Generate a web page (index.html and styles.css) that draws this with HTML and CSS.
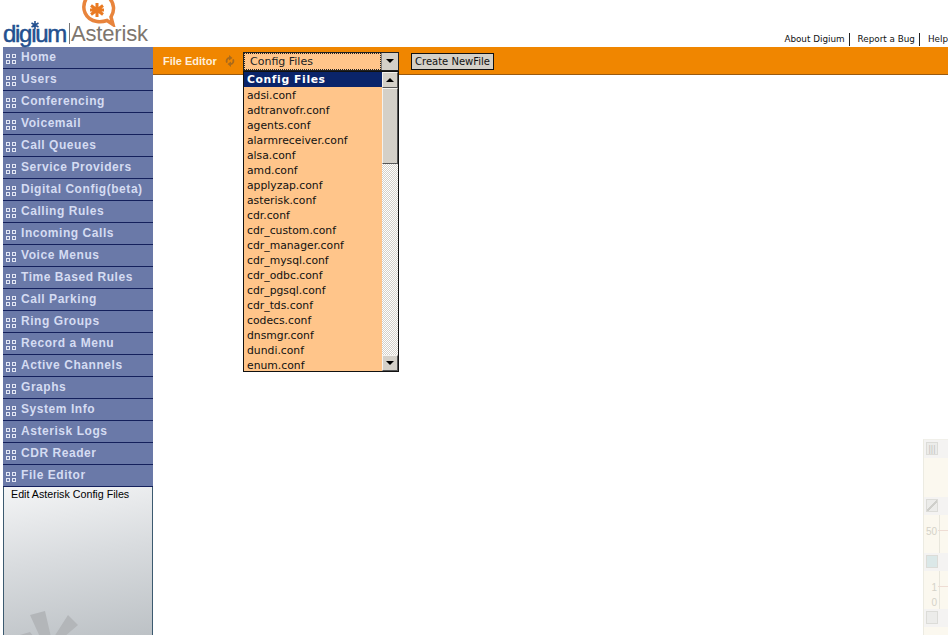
FILE: index.html

```html
<!DOCTYPE html>
<html lang="en">
<head>
    <meta charset="UTF-8">
    <title>Asterisk GUI - File Editor</title>
    <link rel="stylesheet" href="styles.css">
</head>
<body>

    <div class="header">
        <div class="logo">
            <span class="logo-digium">digium</span>
            <span class="logo-asterisk">Asterisk</span>
            <svg class="logo-dot" width="8" height="8" viewBox="0 0 8 8">
                <path d="M4 0 L4 8 M0.5 2 L7.5 6 M7.5 2 L0.5 6" stroke="#23508f" stroke-width="1.6"/>
            </svg>
            <svg class="logo-bubble" width="38" height="27" viewBox="0 0 38 27">
                <path d="M6 -1 C1 8 5 20 17 21.5 C21 22 24 21.5 27 20.5 L33 24.5 L31 17 C35 11 34 3 30 -1" fill="#fff" stroke="#e8843c" stroke-width="3.5"/>
                <path d="M17 3 L17 17 M11 5.5 L23 14.5 M23 5.5 L11 14.5 M10 10 L24 10" stroke="#ea7a22" stroke-width="3"/>
            </svg>
        </div>
        <div class="top-links">
            <a class="top-link">About Digium</a>
            <a class="top-link">Report a Bug</a>
            <a class="top-link last">Help</a>
        </div>
    </div>

    <div class="main">
        <div class="sidebar">
            <div class="menu-item"><span class="dots"><i></i><i></i><i></i><i></i></span>Home</div>
            <div class="menu-item"><span class="dots"><i></i><i></i><i></i><i></i></span>Users</div>
            <div class="menu-item"><span class="dots"><i></i><i></i><i></i><i></i></span>Conferencing</div>
            <div class="menu-item"><span class="dots"><i></i><i></i><i></i><i></i></span>Voicemail</div>
            <div class="menu-item"><span class="dots"><i></i><i></i><i></i><i></i></span>Call Queues</div>
            <div class="menu-item"><span class="dots"><i></i><i></i><i></i><i></i></span>Service Providers</div>
            <div class="menu-item"><span class="dots"><i></i><i></i><i></i><i></i></span>Digital Config(beta)</div>
            <div class="menu-item"><span class="dots"><i></i><i></i><i></i><i></i></span>Calling Rules</div>
            <div class="menu-item"><span class="dots"><i></i><i></i><i></i><i></i></span>Incoming Calls</div>
            <div class="menu-item"><span class="dots"><i></i><i></i><i></i><i></i></span>Voice Menus</div>
            <div class="menu-item"><span class="dots"><i></i><i></i><i></i><i></i></span>Time Based Rules</div>
            <div class="menu-item"><span class="dots"><i></i><i></i><i></i><i></i></span>Call Parking</div>
            <div class="menu-item"><span class="dots"><i></i><i></i><i></i><i></i></span>Ring Groups</div>
            <div class="menu-item"><span class="dots"><i></i><i></i><i></i><i></i></span>Record a Menu</div>
            <div class="menu-item"><span class="dots"><i></i><i></i><i></i><i></i></span>Active Channels</div>
            <div class="menu-item"><span class="dots"><i></i><i></i><i></i><i></i></span>Graphs</div>
            <div class="menu-item"><span class="dots"><i></i><i></i><i></i><i></i></span>System Info</div>
            <div class="menu-item"><span class="dots"><i></i><i></i><i></i><i></i></span>Asterisk Logs</div>
            <div class="menu-item"><span class="dots"><i></i><i></i><i></i><i></i></span>CDR Reader</div>
            <div class="menu-item"><span class="dots"><i></i><i></i><i></i><i></i></span>File Editor</div>
            <div class="panel">
                Edit Asterisk Config Files
                <svg class="panel-star" width="80" height="28" viewBox="0 0 80 28">
                    <path d="M26 6 L41 2 L47 28 L36 28 Z M64 6 L74 16 L60 28 L50 28 Z M9 28 L26 23 L30 28 Z" fill="#b3b6b9"/>
                </svg>
            </div>
        </div>

        <div class="content">
            <div class="toolbar">
                <span class="toolbar-title">File Editor</span>
                <svg class="refresh" width="12" height="12" viewBox="0 0 12 12">
                    <path d="M2.2 8 A4.2 4.2 0 0 1 5 2 L5 0 L8.5 3 L5 5.5 L5 3.8 A2.6 2.6 0 0 0 3.8 7.2 Z M9.8 4 A4.2 4.2 0 0 1 7 10 L7 12 L3.5 9 L7 6.5 L7 8.2 A2.6 2.6 0 0 0 8.2 4.8 Z" fill="#a86a1c"/>
                </svg>
                <div class="select-box">
                    <span class="select-value">Config Files</span>
                    <span class="select-arrow"></span>
                </div>
                <button class="create-btn">Create NewFile</button>
            </div>

            <div class="dropdown">
                <div class="options">
                    <div class="option selected">Config Files</div>
                    <div class="option">adsi.conf</div>
                    <div class="option">adtranvofr.conf</div>
                    <div class="option">agents.conf</div>
                    <div class="option">alarmreceiver.conf</div>
                    <div class="option">alsa.conf</div>
                    <div class="option">amd.conf</div>
                    <div class="option">applyzap.conf</div>
                    <div class="option">asterisk.conf</div>
                    <div class="option">cdr.conf</div>
                    <div class="option">cdr_custom.conf</div>
                    <div class="option">cdr_manager.conf</div>
                    <div class="option">cdr_mysql.conf</div>
                    <div class="option">cdr_odbc.conf</div>
                    <div class="option">cdr_pgsql.conf</div>
                    <div class="option">cdr_tds.conf</div>
                    <div class="option">codecs.conf</div>
                    <div class="option">dnsmgr.conf</div>
                    <div class="option">dundi.conf</div>
                    <div class="option">enum.conf</div>
                </div>
                <div class="scrollbar">
                    <div class="scroll-btn"><span class="arrow-up"></span></div>
                    <div class="scroll-thumb"></div>
                    <div class="scroll-track"></div>
                    <div class="scroll-btn"><span class="arrow-down"></span></div>
                </div>
            </div>

            <!-- faded graph peeking in at the right edge -->
            <div class="ghost">
                <div class="ghost-head"><span class="ghost-icon">|||</span></div>
                <div class="ghost-body tall"></div>
                <div class="ghost-head"><span class="ghost-icon slash"></span></div>
                <div class="ghost-body"><span class="ghost-num">50</span></div>
                <div class="ghost-head"><span class="ghost-icon teal"></span></div>
                <div class="ghost-body"><span class="ghost-num">1<br>0</span></div>
                <div class="ghost-head"><span class="ghost-icon"></span></div>
            </div>
        </div>
    </div>

</body>
</html>
```

FILE: styles.css

```css
html, body {
    margin: 0;
    height: 635px;
    overflow: hidden;
    background-color: white;
}

body {
    font-family: 'Liberation Sans', Arial, sans-serif;
}

.header {
    display: flex;
    justify-content: space-between;
    align-items: flex-end;
    height: 47px;
}

.logo {
    position: relative;
    width: 153px;
    height: 47px;
    display: flex;
    align-items: flex-end;
    padding: 0 0 3px 3px;
    box-sizing: border-box;
    white-space: nowrap;
}

.logo-digium {
    font-size: 24px;
    line-height: 21px;
    height: 21px;
    color: #23508f;
    -webkit-text-stroke: 0.5px #23508f;
    letter-spacing: -1.3px;
    padding-right: 3px;
    border-right: 1px solid #777;
}

.logo-asterisk {
    font-size: 22px;
    line-height: 21px;
    color: #7d766e;
    letter-spacing: -0.15px;
    padding-left: 1px;
}

.logo-dot {
    position: absolute;
    left: 31px;
    top: 21px;
}

.logo-bubble {
    position: absolute;
    left: 80px;
    top: 0;
}

.top-links {
    display: flex;
    margin-bottom: 1px;
    white-space: nowrap;
}

.top-link {
    font-family: 'DejaVu Sans', Verdana, sans-serif;
    font-size: 8.8px;
    line-height: 13px;
    color: #111;
    padding-right: 4px;
    margin-right: 8px;
    border-right: 1px solid #222;
}

.top-link.last {
    border-right: none;
    margin-right: 0;
    padding-right: 0;
}

.main {
    display: flex;
}

.sidebar {
    width: 150px;
    margin-left: 3px;
    flex-shrink: 0;
}

.menu-item {
    height: 20px;
    padding-bottom: 1px;
    line-height: 20px;
    background-color: #6a79a8;
    border-bottom: 1px solid #14205c;
    color: #d5dcf2;
    font-size: 12px;
    font-weight: bold;
    letter-spacing: 0.55px;
    display: flex;
    align-items: center;
    white-space: nowrap;
}

.dots {
    display: grid;
    grid-template-columns: 4px 4px;
    gap: 2px;
    margin: 3px 5px 0 3px;
}

.dots i {
    width: 2px;
    height: 2px;
    border: 1px solid #e4e8f5;
}

.panel {
    position: relative;
    height: 150px;
    box-sizing: border-box;
    padding: 0 0 0 7px;
    font-size: 10.7px;
    line-height: 14px;
    color: #000;
    border-left: 1px solid #3c5a70;
    border-right: 1px solid #3c5a70;
    background: linear-gradient(170deg, #f4f5f6 0%, #d9dcdf 45%, #bcc1c5 100%);
    overflow: hidden;
}

.panel-star {
    position: absolute;
    left: 0;
    bottom: 0;
}

.content {
    position: relative;
    flex: 1;
}

.toolbar {
    display: flex;
    align-items: center;
    height: 27px;
    background-color: #f08600;
    border-bottom: 1px solid #9a5a10;
}

.toolbar-title {
    color: #ffeeda;
    font-size: 11px;
    font-weight: bold;
    margin-left: 10px;
    width: 61px;
}

.refresh {
    margin-right: 7px;
}

.select-box {
    width: 156px;
    height: 19px;
    box-sizing: border-box;
    border: 1px solid #222;
    background-color: #ffc58a;
    display: flex;
    justify-content: space-between;
    margin-top: 1px;
}

.select-value {
    flex: 1;
    border: 1px dotted #222;
    padding-left: 5px;
    font-family: 'DejaVu Sans', Verdana, sans-serif;
    font-size: 11px;
    line-height: 16px;
    color: #222;
}

.select-arrow {
    width: 16px;
    background-color: #d4d0c8;
    border-left: 1px solid #808080;
}

.select-arrow::after,
.arrow-down {
    content: "";
    display: block;
    width: 0;
    height: 0;
    border-left: 4px solid transparent;
    border-right: 4px solid transparent;
    border-top: 4px solid #000;
}

.select-arrow::after {
    margin: 6px auto 0;
}

.create-btn {
    margin: 1px 0 0 12px;
    width: 83px;
    height: 17px;
    padding: 0;
    border: 1px solid #111;
    background-color: #d4d0c8;
    font-family: 'DejaVu Sans', Verdana, sans-serif;
    font-size: 10px;
    color: #111;
}

.dropdown {
    position: absolute;
    left: 90px;
    top: 24px;
    width: 156px;
    height: 301px;
    box-sizing: border-box;
    display: flex;
    border: 1px solid #111;
    background-color: #ffc58a;
}

.options {
    flex: 1;
    overflow: hidden;
}

.option {
    height: 15px;
    line-height: 17px;
    padding-left: 3px;
    font-family: 'DejaVu Sans', Verdana, sans-serif;
    font-size: 10.8px;
    color: #111;
}

.option.selected {
    background-color: #0a246a;
    color: white;
    font-weight: bold;
    line-height: 15px;
    letter-spacing: 0.6px;
}

.scrollbar {
    width: 16px;
    display: flex;
    flex-direction: column;
    background-image: repeating-conic-gradient(#d4d0c8 0 25%, #fff 0 50%);
    background-size: 2px 2px;
}

.scroll-btn,
.scroll-thumb {
    background-color: #d4d0c8;
    border: 1px solid;
    border-color: #f4f2ee #555 #555 #f4f2ee;
    box-sizing: border-box;
}

.scroll-btn {
    height: 16px;
    display: flex;
    align-items: center;
    justify-content: center;
}

.scroll-thumb {
    height: 76px;
}

.scroll-track {
    flex: 1;
}

.arrow-up {
    width: 0;
    height: 0;
    border-left: 4px solid transparent;
    border-right: 4px solid transparent;
    border-bottom: 4px solid #000;
}

.ghost {
    position: absolute;
    right: 0;
    top: 392px;
    width: 25px;
    height: 196px;
    border-left: 1px solid #ecebe2;
    border-top: 1px solid #f1f0ea;
    background-color: #fbf8ef;
    box-sizing: border-box;
}

.ghost-head {
    height: 18px;
    background-color: #f4f3f2;
    padding: 2px 0 0 2px;
    box-sizing: border-box;
}

.ghost-icon {
    display: block;
    width: 12px;
    height: 13px;
    border: 1px solid #dcdcd8;
    background-color: #ececea;
    font-size: 9px;
    line-height: 12px;
    color: #c4c4c0;
    box-sizing: border-box;
    text-align: center;
}

.ghost-icon.slash {
    background: linear-gradient(135deg, #ececea 45%, #cfcfcb 45% 60%, #ececea 60%);
}

.ghost-icon.teal {
    background-color: #dbe8e8;
}

.ghost-body {
    height: 38px;
    margin-left: 15px;
    border-left: 1px solid #e8e6dc;
    position: relative;
}

.ghost-body::after {
    content: "";
    position: absolute;
    left: -2px;
    right: 0;
    top: 15px;
    border-top: 1px solid #eedcd4;
}

.ghost-body.tall {
    height: 39px;
    border-left: none;
}

.ghost-body.tall::after {
    display: none;
}

.ghost-num {
    position: absolute;
    right: 11px;
    top: 9px;
    font-size: 10px;
    line-height: 15px;
    color: #d4d2c8;
    white-space: nowrap;
}
```
